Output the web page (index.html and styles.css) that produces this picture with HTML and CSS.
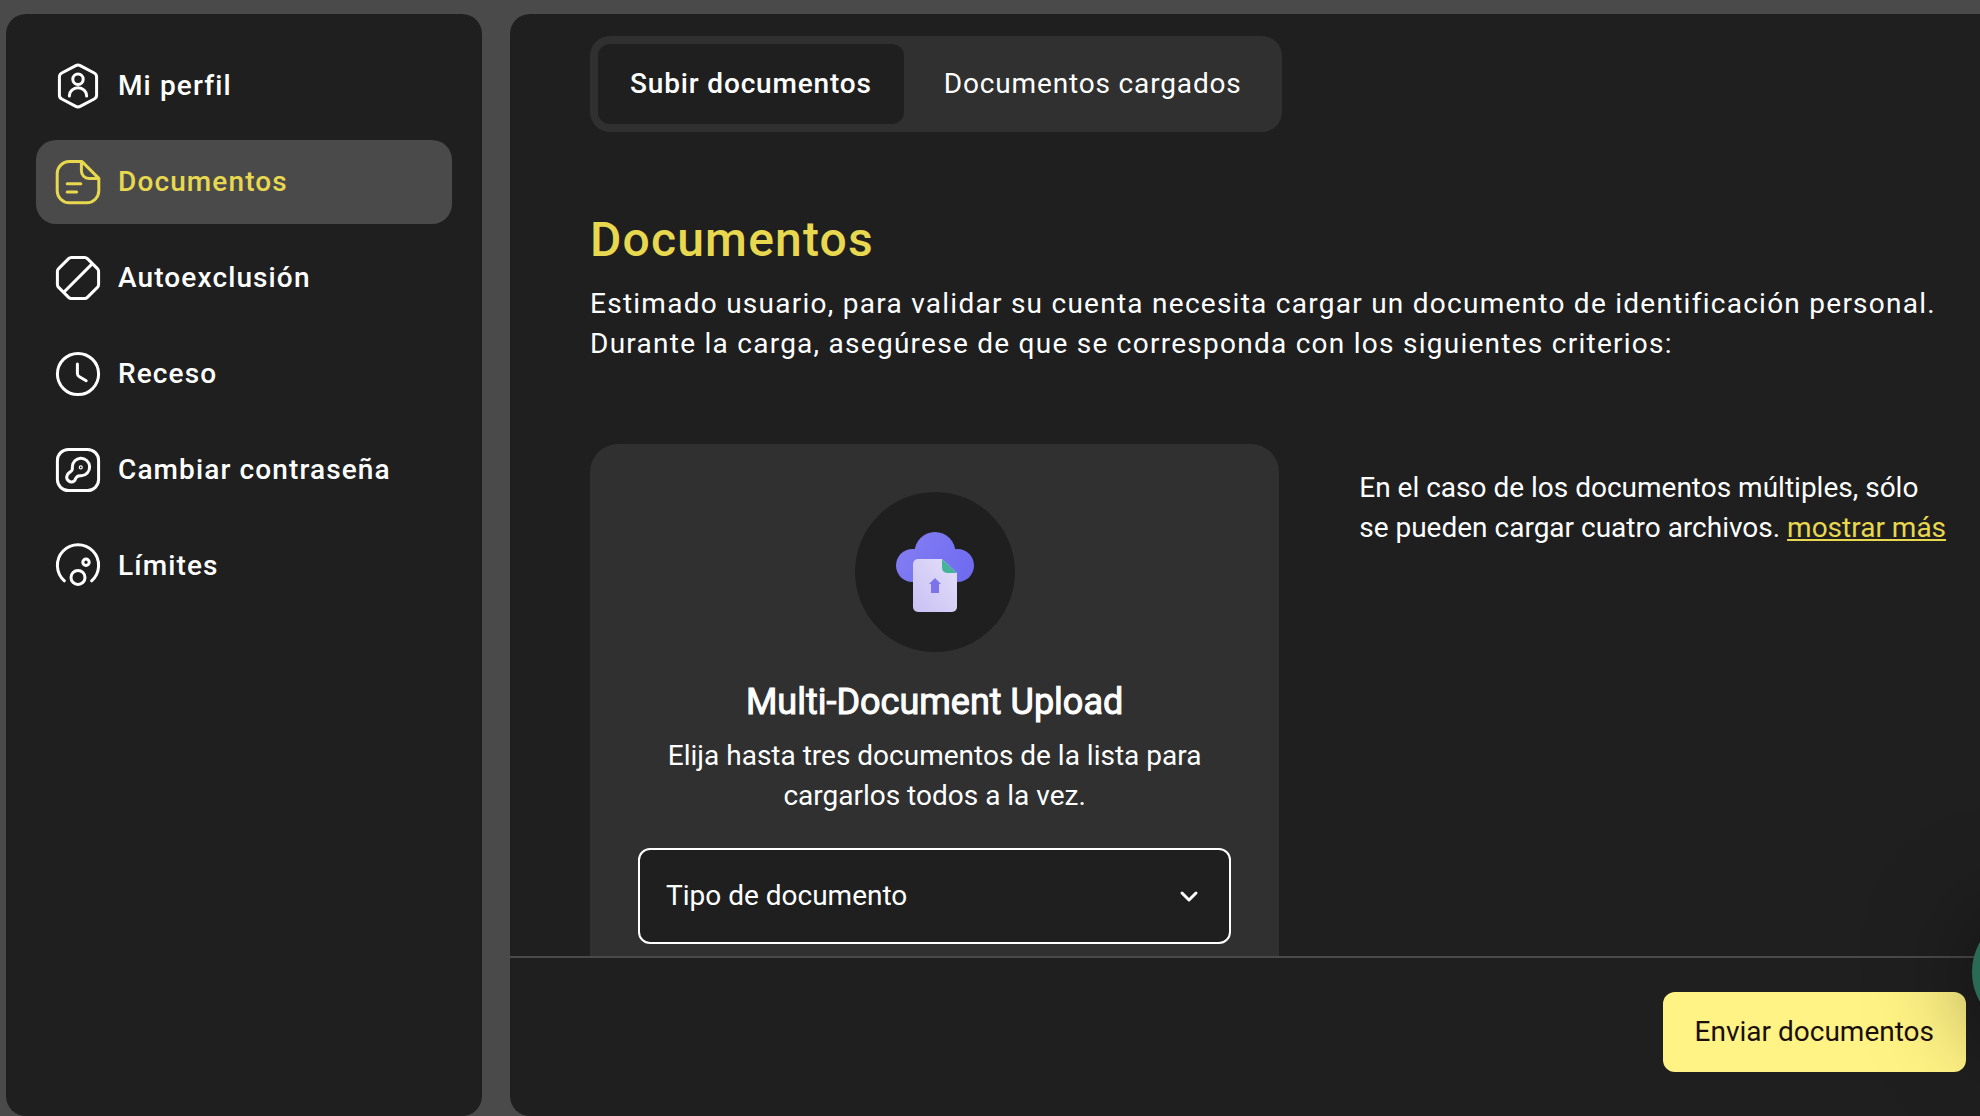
FILE: index.html
```html
<!DOCTYPE html>
<html lang="es">
<head>
  <meta charset="UTF-8" />
  <meta name="viewport" content="width=device-width, initial-scale=1.0"/>
  <title>Documentos</title>
  <link rel="stylesheet" href="styles.css">
</head>
<body>

  <nav class="sidebar">
    <a class="nav-item" href="#perfil">
      <svg class="nav-icon" viewBox="0 0 24 24"><path d="M10.9 1.8a2.3 2.3 0 0 1 2.2 0l7 3.7a2.2 2.2 0 0 1 1.2 2v9a2.2 2.2 0 0 1-1.2 2l-7 3.7a2.3 2.3 0 0 1-2.2 0l-7-3.7a2.2 2.2 0 0 1-1.2-2v-9a2.2 2.2 0 0 1 1.2-2z"/><circle cx="12" cy="8.6" r="2.6"/><path d="M7.7 17v-.3a4.3 3.8 0 0 1 8.6 0v.3"/></svg>
      Mi perfil
    </a>
    <a class="nav-item active" href="#documentos">
      <svg class="nav-icon" viewBox="0 0 24 24"><path d="M14 1.8H7.6a6 6 0 0 0-6 6v8.6a6 6 0 0 0 6 6h8.8a6 6 0 0 0 6-6V10.2zM13.7 1.8v4.700a3.700 3.700 0 0 0 3.700 3.700h5"/><path d="M6.600 12.900h6.800M6.600 17h4.700"/></svg>
      Documentos
    </a>
    <a class="nav-item" href="#autoexclusion">
      <svg class="nav-icon" viewBox="0 0 24 24"><path d="M8.700 1.700h6.600a2 2 0 0 1 1.400.6l5 5a2 2 0 0 1 .6 1.400v6.600a2 2 0 0 1-.6 1.400l-5 5a2 2 0 0 1-1.400.6H8.700a2 2 0 0 1-1.400-.6l-5-5a2 2 0 0 1-.6-1.400V8.700a2 2 0 0 1 .6-1.400l5-5a2 2 0 0 1 1.400-.6z"/><path d="M5.400 18.600 18.800 5.200"/></svg>
      Autoexclusión
    </a>
    <a class="nav-item" href="#receso">
      <svg class="nav-icon" viewBox="0 0 24 24"><circle cx="12" cy="12" r="10.3"/><path d="M11.700 7v4.700c0 .8.300 1.300 1 1.700l3.400 2"/></svg>
      Receso
    </a>
    <a class="nav-item" href="#contrasena">
      <svg class="nav-icon" viewBox="0 0 24 24"><rect x="1.7" y="1.7" width="20.6" height="20.6" rx="5.5"/><path d="M13.200 6.100a4.400 4.400 0 1 1 .4 8.800c-.8 0-1.500-.1-2 .4l-.7.800c-.3.400-.2.900-.7 1.300-1.900 1.600-4.900-.6-3.400-3.200.6-.9 2-1.400 2.300-2.300.2-.5 0-1 .1-1.700a4.400 4.400 0 0 1 4-4.100z"/><circle cx="13.4" cy="10.7" r=".3"/></svg>
      Cambiar contraseña
    </a>
    <a class="nav-item" href="#limites">
      <svg class="nav-icon" viewBox="0 0 24 24"><path d="M5.200 19.400a10.300 10.300 0 1 1 13.600 0"/><circle cx="12" cy="17.7" r="3.5"/><circle cx="16" cy="10.1" r="1.6"/></svg>
      Límites
    </a>
  </nav>

  <main class="panel">
    <div class="content">
      <div class="tabs">
        <button class="tab-button active" type="button">Subir documentos</button>
        <button class="tab-button" type="button">Documentos cargados</button>
      </div>

      <h1>Documentos</h1>
      <p class="intro">Estimado usuario, para validar su cuenta necesita cargar un documento de identificación personal. Durante la carga, asegúrese de que se corresponda con los siguientes criterios:</p>

      <div class="upload-row">
        <section class="upload-card">
          <div class="upload-icon">
            <svg width="80" height="80" viewBox="0 0 80 80">
              <defs>
                <linearGradient id="cloud" gradientUnits="userSpaceOnUse" x1="0" y1="0" x2="80" y2="50">
                  <stop offset="0" stop-color="#8580f2"/>
                  <stop offset="1" stop-color="#6d69f0"/>
                </linearGradient>
                <linearGradient id="sheet" x1="1" y1="0" x2="0" y2="1">
                  <stop offset="0" stop-color="#e3defa"/>
                  <stop offset="1" stop-color="#c9c1f3"/>
                </linearGradient>
              </defs>
              <g fill="url(#cloud)">
                <circle cx="17.5" cy="33.5" r="16.5"/>
                <circle cx="40" cy="20.5" r="20.5"/>
                <circle cx="62.5" cy="33.5" r="16.5"/>
                <rect x="17" y="20" width="46" height="30"/>
              </g>
              <path fill="url(#sheet)" d="M23 27h24l15 14v34a5 5 0 0 1-5 5H23a5 5 0 0 1-5-5V32a5 5 0 0 1 5-5z"/>
              <path fill="#45b39a" d="M47 27v9a5 5 0 0 0 5 5h10z"/>
              <path fill="#7b73ea" d="M40 46l6 6h-2v9h-8v-9h-2z"/>
            </svg>
          </div>
          <h2>Multi-Document Upload</h2>
          <p class="upload-text">Elija hasta tres documentos de la lista para cargarlos todos a la vez.</p>
          <div class="select-box">
            <select aria-label="Tipo de documento">
              <option>Tipo de documento</option>
            </select>
            <svg class="chevron" width="24" height="24" viewBox="0 0 24 24"><path d="M5 9l7 7 7-7"/></svg>
          </div>
        </section>
        <p class="note">En el caso de los documentos múltiples, sólo se pueden cargar cuatro archivos. <a href="#mas">mostrar más</a></p>
      </div>
    </div>

    <footer>
      <button class="send-button" type="button">Enviar documentos</button>
    </footer>
  </main>

  <button class="chat-bubble" type="button" aria-label="Chat"></button>

</body>
</html>
```
FILE: styles.css
```css
* { box-sizing: border-box; }
body {
  font-family: Roboto, sans-serif;
  font-size: 28px;
  line-height: 40px;
  margin: 0;
  padding: 14px 0 0 6px;
  height: 100vh;
  display: flex;
  gap: 28px;
  background: #4a4a4a;
  color: #fff;
  overflow: hidden;
}
button, select {
  font: inherit;
  color: inherit;
}
h1, h2, p { margin: 0; }
.sidebar {
  flex: 0 0 476px;
  display: flex;
  flex-direction: column;
  gap: 12px;
  padding: 30px;
  background: #1f1f1f;
  border-radius: 20px;
}
.nav-item {
  display: flex;
  align-items: center;
  gap: 16px;
  padding: 18px;
  height: 84px;
  border-radius: 20px;
  color: #fff;
  font-weight: 500;
  letter-spacing: 0.04em;
  text-decoration: none;
}
.nav-item.active {
  background: #4a4a4a;
  color: #e8d84f;
}
.nav-icon {
  width: 48px;
  height: 48px;
  fill: none;
  stroke: currentColor;
  stroke-width: 1.5;
  stroke-linecap: round;
  stroke-linejoin: round;
}
.panel {
  flex: 1;
  min-width: 0;
  display: flex;
  flex-direction: column;
  background: #1f1f1f;
  border-radius: 20px 0 0 20px;
}
.content {
  flex: 1;
  min-height: 0;
  padding: 22px 30px 48px 80px;
  overflow-y: auto;
  scrollbar-width: none;
}
.tabs {
  display: inline-flex;
  gap: 8px;
  padding: 8px;
  background: #303030;
  border-radius: 20px;
}
.tab-button {
  height: 80px;
  padding: 0 32px;
  border: none;
  border-radius: 12px;
  background: none;
  letter-spacing: 0.03em;
  cursor: pointer;
}
.tab-button.active {
  background: #1f1f1f;
  font-weight: 500;
}
h1 {
  margin-top: 76px;
  color: #e8d84f;
  font-size: 48px;
  font-weight: 500;
  line-height: 64px;
  letter-spacing: 0.025em;
}
.intro {
  margin-top: 12px;
  letter-spacing: 0.045em;
}
.upload-row {
  display: grid;
  grid-template-columns: 7fr 6fr;
  gap: 80px;
  margin-top: 80px;
}
.upload-card {
  padding: 48px;
  background: #303030;
  border-radius: 28px;
  text-align: center;
}
.upload-icon {
  display: flex;
  align-items: center;
  justify-content: center;
  width: 160px;
  height: 160px;
  margin: 0 auto;
  border-radius: 50%;
  background: #1f1f1f;
}
h2 {
  margin-top: 28px;
  font-size: 36px;
  font-weight: 400;
  line-height: 44px;
  -webkit-text-stroke: 1px #fff;
}
.upload-text {
  margin-top: 12px;
}
.select-box {
  position: relative;
  margin-top: 32px;
}
select {
  appearance: none;
  width: 100%;
  height: 96px;
  padding: 0 64px 0 26px;
  border: 2px solid #fff;
  border-radius: 12px;
  background: #1f1f1f;
}
.chevron {
  position: absolute;
  right: 30px;
  top: 36px;
  fill: none;
  stroke: #fff;
  stroke-width: 3;
  stroke-linecap: round;
  stroke-linejoin: round;
  pointer-events: none;
}
.note {
  padding-top: 24px;
}
.note a {
  color: #e8d84f;
}
footer {
  display: flex;
  justify-content: flex-end;
  padding: 34px 14px 44px;
  border-top: 2px solid #4a4a4a;
}
.send-button {
  height: 80px;
  padding: 0 32px;
  border: none;
  border-radius: 12px;
  background: #fff385;
  color: #1a0f0a;
  cursor: pointer;
}
.chat-bubble {
  position: fixed;
  right: -112px;
  bottom: 84px;
  width: 120px;
  height: 120px;
  border: none;
  border-radius: 50%;
  background: #2a6b55;
  box-shadow: 0 4px 100px rgba(0, 0, 0, 0.5);
}
```
